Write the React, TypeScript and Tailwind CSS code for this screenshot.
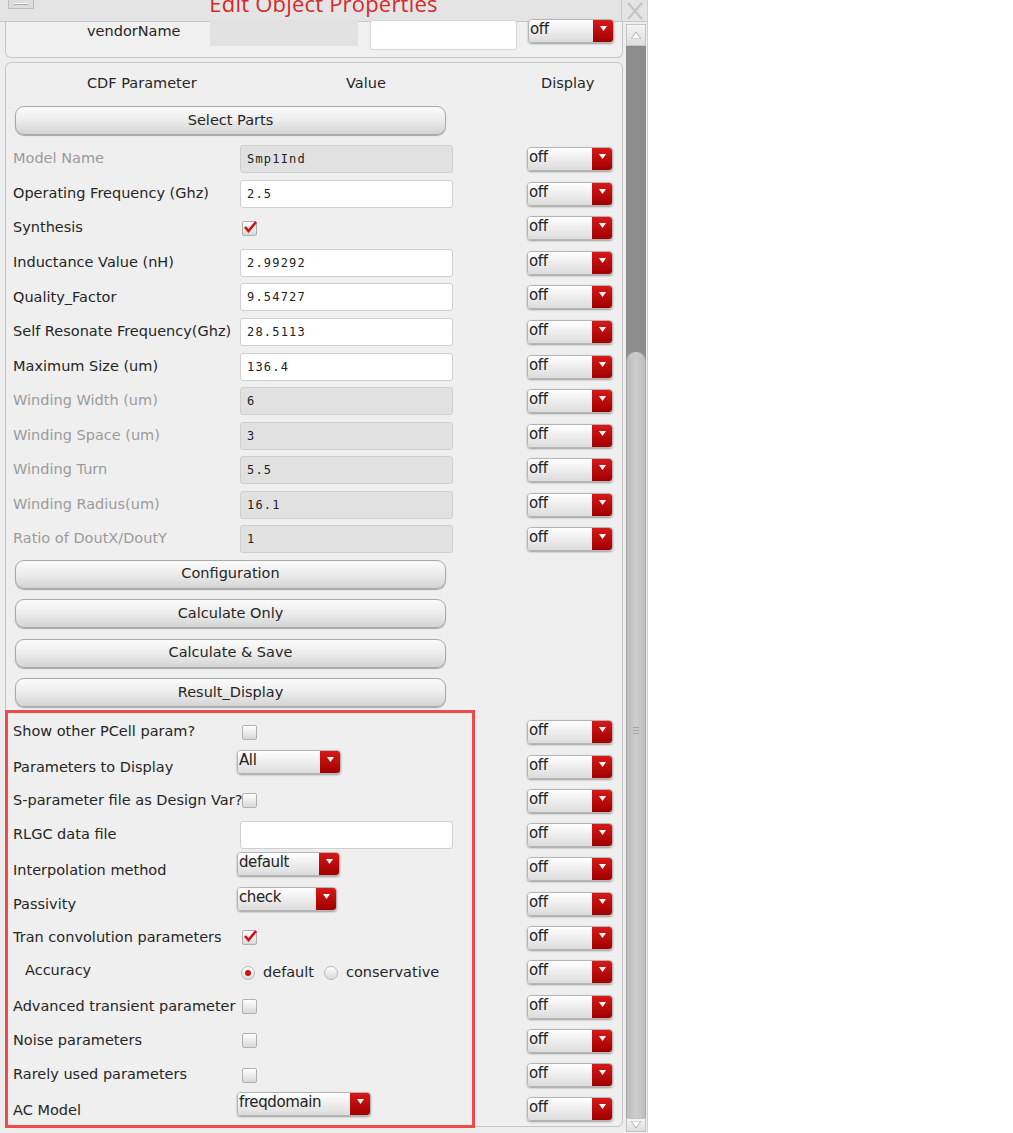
import React from "react";

type Row =
  | { label: string; kind: "input"; value: string; disabled?: boolean; indent?: boolean }
  | { label: string; kind: "check"; checked: boolean }
  | { label: string; kind: "select"; value: string; width: number }
  | { label: string; kind: "radio"; indent?: boolean };

const upperRows: Row[] = [
  { label: "Model Name", kind: "input", value: "Smp1Ind", disabled: true },
  { label: "Operating Frequency (Ghz)", kind: "input", value: "2.5" },
  { label: "Synthesis", kind: "check", checked: true },
  { label: "Inductance Value (nH)", kind: "input", value: "2.99292" },
  { label: "Quality_Factor", kind: "input", value: "9.54727" },
  { label: "Self Resonate Frequency(Ghz)", kind: "input", value: "28.5113" },
  { label: "Maximum Size (um)", kind: "input", value: "136.4" },
  { label: "Winding Width (um)", kind: "input", value: "6", disabled: true },
  { label: "Winding Space (um)", kind: "input", value: "3", disabled: true },
  { label: "Winding Turn", kind: "input", value: "5.5", disabled: true },
  { label: "Winding Radius(um)", kind: "input", value: "16.1", disabled: true },
  { label: "Ratio of DoutX/DoutY", kind: "input", value: "1", disabled: true },
];

const lowerRows: Row[] = [
  { label: "Show other PCell param?", kind: "check", checked: false },
  { label: "Parameters to Display", kind: "select", value: "All", width: 104 },
  { label: "S-parameter file as Design Var?", kind: "check", checked: false },
  { label: "RLGC data file", kind: "input", value: "" },
  { label: "Interpolation method", kind: "select", value: "default", width: 103 },
  { label: "Passivity", kind: "select", value: "check", width: 100 },
  { label: "Tran convolution parameters", kind: "check", checked: true },
  { label: "Accuracy", kind: "radio", indent: true },
  { label: "Advanced transient parameter", kind: "check", checked: false },
  { label: "Noise parameters", kind: "check", checked: false },
  { label: "Rarely used parameters", kind: "check", checked: false },
  { label: "AC Model", kind: "select", value: "freqdomain", width: 134 },
];

const buttons = ["Configuration", "Calculate Only", "Calculate & Save", "Result_Display"];

const sans = "font-['DejaVu_Sans','Noto_Sans',sans-serif]";

function Dropdown({ value, width }: { value: string; width: number }) {
  return (
    <div
      className="flex h-[24px] rounded-[4px] border border-[#b4b4b4] shadow-[0_1px_2px_rgba(0,0,0,0.35)] overflow-hidden"
      style={{ width }}
    >
      <div className="flex-1 bg-gradient-to-b from-[#ffffff] to-[#dcdcdc] pl-[1px] text-[15px] leading-[18px] tracking-[-0.4px] text-[#222]">
        {value}
      </div>
      <div className="w-[20px] bg-gradient-to-b from-[#d81818] to-[#a00000] flex justify-center pt-[6px]">
        <svg width="7" height="5" viewBox="0 0 7 5">
          <path d="M0 0 L7 0 L3.5 5 Z" fill="#fff" />
        </svg>
      </div>
    </div>
  );
}

function Checkbox({ checked }: { checked: boolean }) {
  return (
    <div className="relative ml-[3px] w-[15px] h-[15px] rounded-[2px] border border-[#b0b0b0] bg-gradient-to-b from-[#ffffff] to-[#d8d8d8]">
      {checked && (
        <svg className="absolute -top-[1px] left-[1px]" width="13" height="12" viewBox="0 0 13 12">
          <path d="M1 6 L4.5 10 L12 1" stroke="#d01010" strokeWidth="2.6" fill="none" />
        </svg>
      )}
    </div>
  );
}

function Radio({ on }: { on: boolean }) {
  return (
    <div className="w-[14px] h-[14px] rounded-full border border-[#b8b8b8] bg-gradient-to-b from-[#ffffff] to-[#dadada] flex items-center justify-center">
      {on && <div className="w-[6px] h-[6px] rounded-full bg-[#d01010]" />}
    </div>
  );
}

function TextField({ value, disabled }: { value: string; disabled?: boolean }) {
  return (
    <div
      className={`w-[213px] h-[28px] rounded-[3px] border border-[#cfcfcf] flex items-center pl-[6px] font-['DejaVu_Sans_Mono',monospace] text-[12px] tracking-[1.2px] text-[#222] ${
        disabled ? "bg-[#e1e1e1]" : "bg-white"
      }`}
    >
      {value}
    </div>
  );
}

function ParamRow({ row, h }: { row: Row; h: string }) {
  const disabled = row.kind === "input" && row.disabled;
  return (
    <div className={`grid grid-cols-[224px_290px_85px] items-center ${h}`}>
      <div
        className={`text-[14.5px] whitespace-nowrap ${row.kind === "select" ? "pt-[2px]" : ""} ${
          row.kind === "radio" ? "pl-[12px] -mt-[2px]" : ""
        } ${disabled ? "text-[#9b9b9b]" : "text-[#262626]"}`}
      >
        {row.label}
      </div>
      <div className="flex items-center">
        {row.kind === "input" && (
          <div className="pl-[3px]">
            <TextField value={row.value} disabled={row.disabled} />
          </div>
        )}
        {row.kind === "check" && (
          <div className="pl-[2px]">
            <Checkbox checked={row.checked} />
          </div>
        )}
        {row.kind === "select" && (
          <div className="-mt-[10px]">
            <Dropdown value={row.value} width={row.width} />
          </div>
        )}
        {row.kind === "radio" && (
          <div className="flex items-center pl-[4px] pt-[2px] text-[14.5px] text-[#262626]">
            <Radio on />
            <span className="ml-[8px]">default</span>
            <span className="ml-[10px]">
              <Radio on={false} />
            </span>
            <span className="ml-[8px]">conservative</span>
          </div>
        )}
      </div>
      <div>
        <Dropdown value="off" width={86} />
      </div>
    </div>
  );
}

function PillButton({ label }: { label: string }) {
  return (
    <div className="ml-[2px] w-[431px] h-[29px] rounded-[9px] border border-[#a9a9a9] bg-gradient-to-b from-[#fbfbfb] via-[#ececec] to-[#d4d4d4] shadow-[0_1px_1px_rgba(0,0,0,0.3)] flex items-center justify-center text-[14.5px] text-[#262626]">
      {label}
    </div>
  );
}

function Scrollbar() {
  return (
    <div className="w-[22px] flex flex-col pt-[2px] pb-[1px]">
      <div className="h-[22px] mx-[1px] bg-gradient-to-b from-[#f4f4f4] to-[#dedede] border border-[#c4c4c4] flex items-center justify-center">
        <svg width="10" height="7" viewBox="0 0 10 7">
          <path d="M0 7 L5 0 L10 7 Z" fill="#fafafa" stroke="#b0b0b0" />
        </svg>
      </div>
      <div className="flex-1 mx-[1px] bg-[#8d8d8d] flex flex-col">
        <div className="h-[306px]" />
        <div className="flex-1 rounded-t-[9px] bg-gradient-to-r from-[#bdbdbd] via-[#cdcdcd] to-[#bdbdbd] border-x border-[#a8a8a8] flex flex-col items-center pt-[375px]">
          <div className="w-[6px] h-[1px] bg-[#a6a6a6]" />
          <div className="w-[6px] h-[1px] bg-[#a6a6a6] mt-[2px]" />
          <div className="w-[6px] h-[1px] bg-[#a6a6a6] mt-[2px]" />
        </div>
      </div>
      <div className="h-[14px] mx-[1px] bg-gradient-to-b from-[#f4f4f4] to-[#dedede] border border-[#c4c4c4] flex items-start justify-center pt-[2px]">
        <svg width="10" height="7" viewBox="0 0 10 7">
          <path d="M0 0 L5 7 L10 0 Z" fill="#fafafa" stroke="#b0b0b0" />
        </svg>
      </div>
    </div>
  );
}

export default function App() {
  return (
    <div className={`w-[1013px] h-[1133px] bg-white overflow-hidden ${sans}`}>
      <div className="w-[648px] h-[1133px] bg-[#ededed] flex flex-col border-r border-[#d0d0d0]">
        {/* title bar */}
        <div className="h-[22px] flex items-start bg-[#e4e4e4] border-b border-[#c8c8c8] overflow-hidden">
          <div className="ml-[8px] w-[26px] h-[9px] border border-[#bdbdbd] border-t-0 bg-[#dcdcdc] flex items-start justify-center pt-[3px]">
            <div className="w-[14px] h-[2px] bg-[#f8f8f8] border-b border-[#aaa]" />
          </div>
          <div className="flex-1 text-center font-['Open_Sans',sans-serif] text-[22px] leading-[22px] -mt-[8px] text-[#d42a2a] tracking-[0.2px] pr-[8px]">
            Edit Object Properties
          </div>
          <div className="w-[26px] h-[21px] border-l border-[#c8c8c8] flex items-center justify-center">
            <svg width="18" height="18" viewBox="0 0 18 18">
              <path d="M2 1 L16 17 M16 1 L2 17" stroke="#c4c4c4" strokeWidth="2.2" />
            </svg>
          </div>
        </div>

        <div className="flex-1 flex">
          <div className="w-[625px] flex flex-col pl-[5px] pr-[2px] relative">
            {/* vendor panel (scrolled, top hidden) */}
            <div className="h-[36px] border-x border-b border-[#c6c6c6] rounded-b-[6px] bg-[#f0f0f0] flex items-start">
              <div className="w-[204px] text-[14.5px] text-[#262626] pl-[81px] -mt-[1px]">vendorName</div>
              <div className="w-[148px] h-[26px] bg-[#e1e1e1] -mt-[2px]" />
              <div className="ml-[12px] w-[147px] h-[30px] bg-white border border-[#d6d6d6] rounded-[3px] -mt-[2px]" />
              <div className="ml-[11px] -mt-[3px]">
                <Dropdown value="off" width={86} />
              </div>
            </div>

            {/* CDF parameter panel */}
            <div className="mt-[4px] h-[1065px] border border-[#c6c6c6] rounded-[6px] bg-[#efefef] pl-[7px]">
              <div className="grid grid-cols-[224px_290px_85px] h-[43px] items-center text-[14.5px] text-[#262626] pb-[1px]">
                <div className="pl-[74px] whitespace-nowrap">CDF Parameter</div>
                <div className="pl-[109px]">Value</div>
                <div className="pl-[14px]">Display</div>
              </div>
              <PillButton label="Select Parts" />
              <div className="mt-[7px]">
                {upperRows.map((r) => (
                  <ParamRow key={r.label} row={r} h="h-[34.55px]" />
                ))}
              </div>
              <div className="flex flex-col gap-[10.5px] mt-[3px]">
                {buttons.map((b) => (
                  <PillButton key={b} label={b} />
                ))}
              </div>
              <div className="mt-[8px]">
                {lowerRows.map((r) => (
                  <ParamRow key={r.label} row={r} h="h-[34.3px]" />
                ))}
              </div>
            </div>

            {/* highlight annotation */}
            <div className="absolute left-[5px] top-[688px] w-[470px] h-[418px] border-[3px] border-[#ef4b4b] pointer-events-none" />
          </div>
          <Scrollbar />
        </div>
      </div>
    </div>
  );
}
